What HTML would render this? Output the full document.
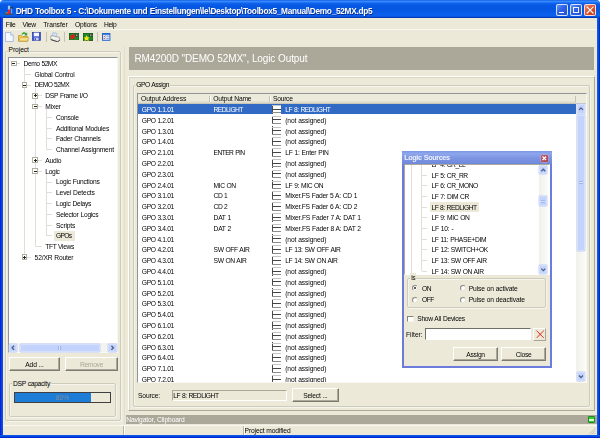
<!DOCTYPE html>
<html><head><meta charset="utf-8"><title>DHD Toolbox 5</title>
<style>
html,body{margin:0;padding:0;}
body{width:600px;height:438px;overflow:hidden;background:#ECE9D8;font-family:"Liberation Sans",sans-serif;position:relative;}
div,span.t{position:absolute;box-sizing:border-box;}
span.t{white-space:nowrap;will-change:opacity;opacity:0.999;}
.grp{border:0.8px solid #CDCBBB;border-radius:2px;box-shadow:0.7px 0.7px 0 #FAF9F4,inset 0.7px 0.7px 0 #FAF9F4;}
.sunk{border:1px solid;border-color:#8F9398 #F8F7F2 #F8F7F2 #8F9398;background:#fff;}
.btn{border:1px solid;border-color:#fff #7D7B70 #7D7B70 #fff;background:#ECE9D8;box-shadow:inset -1px -1px 0 #ACA899;text-align:center;}
.sb{background:#C4D3FC;border:0.6px solid #D4E0FE;border-radius:1px;box-shadow:0 0 0 0.4px #B9C9F6;}
</style></head><body>

<div style="left:0px;top:0px;width:5px;height:5px;background:#fff;"></div>
<div style="left:595px;top:0px;width:5px;height:5px;background:#fff;"></div>
<div style="left:0px;top:0px;width:600px;height:17.5px;background:linear-gradient(#0C5CE8 0%,#3D8EFB 7%,#2276F6 13%,#0C60EA 20%,#0657E1 32%,#0556E0 50%,#085CE8 70%,#0B61EE 86%,#0755DE 92%,#023CB8 97%,#002E9A 100%);border-radius:3.5px 3.5px 0 0;"></div>
<div style="left:0px;top:17px;width:3.1px;height:421px;background:linear-gradient(90deg,#0019CF,#0A3EE4 45%,#1650EC);"></div>
<div style="left:596.8px;top:17px;width:3.2px;height:421px;background:linear-gradient(90deg,#1660E8,#0046E0 60%,#0019CF);"></div>
<div style="left:0px;top:434.8px;width:600px;height:3.2px;background:linear-gradient(#1660E8,#0046E0 50%,#0019CF);"></div>
<svg style="position:absolute;left:4px;top:4.5px" width="9.6" height="10" viewBox="0 0 9.6 10"><rect x="0.2" y="8.5" width="8.8" height="1.3" fill="#5A4A34"/><rect x="1.5" y="7" width="2.5" height="1.5" fill="#8A7A60"/><rect x="3.9" y="0.7" width="2.3" height="4" fill="#A4C6F4"/><rect x="3.9" y="4.7" width="2.3" height="4" fill="#F02222"/><rect x="6.3" y="2.3" width="2.7" height="1.2" fill="#3A2C1E"/><rect x="7.3" y="3.5" width="0.8" height="5" fill="#A8C0EC"/></svg>
<span class="t" style="left:15.7px;top:5.95px;line-height:10px;font-size:8.3px;color:#fff;letter-spacing:-0.307px;word-spacing:0.307px;font-weight:bold;text-shadow:0.6px 0.6px 0 #0A2A8A;">DHD Toolbox 5 - C:\Dokumente und Einstellungen\le\Desktop\Toolbox5_Manual\Demo_52MX.dp5</span>
<div style="left:556.3px;top:4.1px;width:12.2px;height:12.3px;background:linear-gradient(135deg,#5C94F8,#2E62E4 45%,#2452DC);border:0.6px solid rgba(255,255,255,0.8);border-radius:2px;"></div>
<div style="left:559.0999999999999px;top:11.6px;width:4.6px;height:1.6px;background:#fff;"></div>
<div style="left:570.2px;top:4.1px;width:12.2px;height:12.3px;background:linear-gradient(135deg,#5C94F8,#2E62E4 45%,#2452DC);border:0.6px solid rgba(255,255,255,0.8);border-radius:2px;"></div>
<div style="left:573.2px;top:6.8px;width:6.3px;height:6.4px;border:0.7px solid rgba(255,255,255,0.9);border-top-width:1.7px;"></div>
<div style="left:583.9px;top:4.1px;width:12.2px;height:12.3px;background:linear-gradient(135deg,#EE9070,#DC5230 45%,#C23A1A);border:0.6px solid rgba(255,255,255,0.8);border-radius:2px;"></div>
<svg style="position:absolute;left:585.9px;top:6.199999999999999px" width="8.2" height="8.2" viewBox="0 0 8.2 8.2"><path d="M0.7 0.7L7.5 7.5M7.5 0.7L0.7 7.5" stroke="#fff" stroke-width="1.1" fill="none"/></svg>
<span class="t" style="left:5.8px;top:19.85px;line-height:10px;font-size:6.7px;color:#000;letter-spacing:-0.311px;">File</span>
<span class="t" style="left:22.6px;top:19.85px;line-height:10px;font-size:6.7px;color:#000;letter-spacing:-0.317px;">View</span>
<span class="t" style="left:43.2px;top:19.85px;line-height:10px;font-size:6.7px;color:#000;letter-spacing:-0.028px;">Transfer</span>
<span class="t" style="left:75px;top:19.85px;line-height:10px;font-size:6.7px;color:#000;letter-spacing:-0.143px;">Options</span>
<span class="t" style="left:104px;top:19.85px;line-height:10px;font-size:6.7px;color:#000;letter-spacing:-0.311px;">Help</span>
<div style="left:3.3px;top:29.2px;width:593.5px;height:0.8px;background:#F9F8F2;"></div>
<svg style="position:absolute;left:5.4px;top:32px" width="9" height="10" viewBox="0 0 9 10"><path d="M0.5 0.5H5.6L8.3 3.2V9.5H0.5Z" fill="#F4F8FF" stroke="#9DB3DC" stroke-width="0.8"/><path d="M5.6 0.5V3.2H8.3" fill="#D0DCF4" stroke="#9DB3DC" stroke-width="0.6"/></svg>
<svg style="position:absolute;left:17.6px;top:31.4px" width="11" height="11" viewBox="0 0 11 11"><path d="M0.5 4.5H3.8L4.8 5.5H9.8V10.3H0.5Z" fill="#F2CC55" stroke="#B8922A" stroke-width="0.7"/><path d="M0.8 10L2.4 6.6H10.4L9.6 10Z" fill="#F8E08A" stroke="#B8922A" stroke-width="0.5"/><path d="M3.6 3.2C4.6 1 7.2 0.8 8.2 2.4L9.2 1.4V4.6H6.2L7.2 3.5C6.6 2.6 5.4 2.6 4.9 3.6Z" fill="#35A030"/></svg>
<svg style="position:absolute;left:32.3px;top:32.2px" width="9" height="9" viewBox="0 0 9 9"><rect x="0.4" y="0.4" width="8" height="8" fill="#3F55D0" stroke="#2A389C" stroke-width="0.7"/><rect x="1.8" y="0.7" width="5.2" height="3.6" fill="#F4F6FF"/><rect x="2.2" y="5.6" width="4.4" height="2.8" fill="#C8CEEC"/><rect x="2.8" y="6.1" width="1.2" height="2" fill="#3F55D0"/></svg>
<div style="left:45.5px;top:31.8px;width:0.8px;height:10px;background:#C5C2B2;"></div>
<svg style="position:absolute;left:50px;top:31.6px" width="11" height="10.4" viewBox="0 0 11 10.4"><path d="M3 0.5L7.2 1.5L6.2 5L1.8 4Z" fill="#CFE2FA" stroke="#8AA6D0" stroke-width="0.5"/><path d="M0.6 4.2L2 3.6L9.6 5.4L9.8 8.2L7.6 9.8L0.8 7.6Z" fill="#E8E8E4" stroke="#8A8A8A" stroke-width="0.6"/><path d="M0.8 7.6L7.6 9.8L9.8 8.2" stroke="#333" stroke-width="0.9" fill="none"/><path d="M2 5.4L7.4 6.8" stroke="#fff" stroke-width="0.9"/></svg>
<div style="left:64.0px;top:31.8px;width:0.8px;height:10px;background:#C5C2B2;"></div>
<svg style="position:absolute;left:68.8px;top:32.8px" width="10" height="7.4" viewBox="0 0 10 7.4"><rect x="0" y="0" width="10" height="7.4" fill="#1F8A28"/><rect x="0" y="0" width="10" height="7.4" fill="none" stroke="#14401A" stroke-width="0.8"/><rect x="6" y="1" width="3" height="2.6" fill="#3A3A3A"/><rect x="7" y="1.6" width="1.4" height="1.2" fill="#C8C8C8"/><path d="M3.6 0.6L4.7 2.6L6.8 2.8L5.2 4.2L5.8 6.6L3.6 5.4L1.4 6.6L2 4.2L0.6 2.8L2.6 2.6Z" fill="#E81818"/></svg>
<svg style="position:absolute;left:82.7px;top:32.8px" width="10" height="8.6" viewBox="0 0 10 8.6"><rect x="0" y="0" width="10" height="7.4" fill="#1F8A28"/><rect x="0" y="0" width="10" height="7.4" fill="none" stroke="#14401A" stroke-width="0.8"/><rect x="6" y="1" width="3" height="2.6" fill="#3A3A3A"/><rect x="7" y="1.6" width="1.4" height="1.2" fill="#C8C8C8"/><path d="M3.6 2.2L4.7 4.2L6.8 4.4L5.2 5.8L5.8 8.2L3.6 7L1.4 8.2L2 5.8L0.6 4.4L2.6 4.2Z" fill="#F4E818"/></svg>
<div style="left:96.5px;top:31.8px;width:0.8px;height:10px;background:#C5C2B2;"></div>
<svg style="position:absolute;left:102.4px;top:33px" width="8.4" height="7.8" viewBox="0 0 8.4 7.8"><rect x="0.5" y="0.5" width="7.4" height="6.8" fill="#E4EEFC" stroke="#2468D0" stroke-width="1"/><rect x="0.5" y="0.3" width="7.4" height="1.5" fill="#2468D0"/><path d="M1.6 3L2.3 3.8L3.4 2.4M1.6 5.2L2.3 6L3.4 4.6" stroke="#D03020" stroke-width="0.8" fill="none"/><path d="M4.4 3.2H6.8M4.4 5.4H6.8" stroke="#5C8CE0" stroke-width="0.8"/></svg>
<div class="grp" style="left:4.6px;top:50.5px;width:116.4px;height:370.8px;"></div>
<span class="t" style="left:7.6px;top:45.35px;line-height:10px;font-size:6.7px;color:#000;letter-spacing:-0.079px;background:#ECE9D8;padding:0 1px;">Project</span>
<div class="sunk" style="left:7.8px;top:56.6px;width:110.2px;height:296.2px;"></div>
<div style="left:24.15px;top:66.4px;width:0.7px;height:190.85999999999999px;background:#E0DED5;"></div>
<div style="left:34.85px;top:87.94px;width:0.7px;height:158.55px;background:#E0DED5;"></div>
<div style="left:45.65px;top:109.47999999999999px;width:0.7px;height:40.08000000000001px;background:#E0DED5;"></div>
<div style="left:45.65px;top:174.1px;width:0.7px;height:61.620000000000005px;background:#E0DED5;"></div>
<div style="left:13.8px;top:63.05px;width:6.199999999999999px;height:0.7px;background:#E0DED5;"></div>
<span class="t" style="left:23.6px;top:58.95px;line-height:10px;font-size:6.7px;color:#000;letter-spacing:-0.476px;word-spacing:0.476px;">Demo 52MX</span>
<div style="left:10.9px;top:60.5px;width:5.8px;height:5.8px;background:#fff;border:0.7px solid #B0AE9E;"></div>
<div style="left:12.200000000000001px;top:63.0px;width:3.2px;height:0.8px;background:#222;"></div>
<div style="left:24.5px;top:73.82000000000001px;width:6.5px;height:0.7px;background:#E0DED5;"></div>
<span class="t" style="left:34.6px;top:69.72px;line-height:10px;font-size:6.7px;color:#000;letter-spacing:-0.218px;word-spacing:0.218px;">Global Control</span>
<div style="left:24.5px;top:84.59px;width:6.5px;height:0.7px;background:#E0DED5;"></div>
<span class="t" style="left:34.6px;top:80.49px;line-height:10px;font-size:6.7px;color:#000;letter-spacing:-0.605px;word-spacing:0.605px;">DEMO 52MX</span>
<div style="left:21.6px;top:82.03999999999999px;width:5.8px;height:5.8px;background:#fff;border:0.7px solid #B0AE9E;"></div>
<div style="left:22.9px;top:84.53999999999999px;width:3.2px;height:0.8px;background:#222;"></div>
<div style="left:35.2px;top:95.36000000000001px;width:6.499999999999993px;height:0.7px;background:#E0DED5;"></div>
<span class="t" style="left:45.3px;top:91.26px;line-height:10px;font-size:6.7px;color:#000;letter-spacing:-0.299px;word-spacing:0.299px;">DSP Frame I/O</span>
<div style="left:32.300000000000004px;top:92.81px;width:5.8px;height:5.8px;background:#fff;border:0.7px solid #B0AE9E;"></div>
<div style="left:33.6px;top:95.31px;width:3.2px;height:0.8px;background:#222;"></div>
<div style="left:34.800000000000004px;top:94.11000000000001px;width:0.8px;height:3.2px;background:#222;"></div>
<div style="left:35.2px;top:106.13px;width:6.499999999999993px;height:0.7px;background:#E0DED5;"></div>
<span class="t" style="left:45.3px;top:102.03px;line-height:10px;font-size:6.7px;color:#000;letter-spacing:-0.171px;">Mixer</span>
<div style="left:32.300000000000004px;top:103.57999999999998px;width:5.8px;height:5.8px;background:#fff;border:0.7px solid #B0AE9E;"></div>
<div style="left:33.6px;top:106.07999999999998px;width:3.2px;height:0.8px;background:#222;"></div>
<div style="left:46.0px;top:116.9px;width:6.399999999999999px;height:0.7px;background:#E0DED5;"></div>
<span class="t" style="left:56.0px;top:112.80px;line-height:10px;font-size:6.7px;color:#000;letter-spacing:-0.271px;">Console</span>
<div style="left:46.0px;top:127.67000000000002px;width:6.399999999999999px;height:0.7px;background:#E0DED5;"></div>
<span class="t" style="left:56.0px;top:123.57px;line-height:10px;font-size:6.7px;color:#000;letter-spacing:-0.205px;word-spacing:0.205px;">Additional Modules</span>
<div style="left:46.0px;top:138.44px;width:6.399999999999999px;height:0.7px;background:#E0DED5;"></div>
<span class="t" style="left:56.0px;top:134.34px;line-height:10px;font-size:6.7px;color:#000;letter-spacing:-0.223px;word-spacing:0.223px;">Fader Channels</span>
<div style="left:46.0px;top:149.21px;width:6.399999999999999px;height:0.7px;background:#E0DED5;"></div>
<span class="t" style="left:56.0px;top:145.11px;line-height:10px;font-size:6.7px;color:#000;letter-spacing:-0.209px;word-spacing:0.209px;">Channel Assignment</span>
<div style="left:35.2px;top:159.98px;width:6.499999999999993px;height:0.7px;background:#E0DED5;"></div>
<span class="t" style="left:45.3px;top:155.88px;line-height:10px;font-size:6.7px;color:#000;letter-spacing:-0.204px;">Audio</span>
<div style="left:32.300000000000004px;top:157.42999999999998px;width:5.8px;height:5.8px;background:#fff;border:0.7px solid #B0AE9E;"></div>
<div style="left:33.6px;top:159.92999999999998px;width:3.2px;height:0.8px;background:#222;"></div>
<div style="left:34.800000000000004px;top:158.73px;width:0.8px;height:3.2px;background:#222;"></div>
<div style="left:35.2px;top:170.75px;width:6.499999999999993px;height:0.7px;background:#E0DED5;"></div>
<span class="t" style="left:45.3px;top:166.65px;line-height:10px;font-size:6.7px;color:#000;letter-spacing:-0.338px;">Logic</span>
<div style="left:32.300000000000004px;top:168.2px;width:5.8px;height:5.8px;background:#fff;border:0.7px solid #B0AE9E;"></div>
<div style="left:33.6px;top:170.7px;width:3.2px;height:0.8px;background:#222;"></div>
<div style="left:46.0px;top:181.52px;width:6.399999999999999px;height:0.7px;background:#E0DED5;"></div>
<span class="t" style="left:56.0px;top:177.42px;line-height:10px;font-size:6.7px;color:#000;letter-spacing:-0.239px;word-spacing:0.239px;">Logic Functions</span>
<div style="left:46.0px;top:192.29000000000002px;width:6.399999999999999px;height:0.7px;background:#E0DED5;"></div>
<span class="t" style="left:56.0px;top:188.19px;line-height:10px;font-size:6.7px;color:#000;letter-spacing:-0.149px;word-spacing:0.149px;">Level Detects</span>
<div style="left:46.0px;top:203.06px;width:6.399999999999999px;height:0.7px;background:#E0DED5;"></div>
<span class="t" style="left:56.0px;top:198.96px;line-height:10px;font-size:6.7px;color:#000;letter-spacing:-0.285px;word-spacing:0.285px;">Logic Delays</span>
<div style="left:46.0px;top:213.83px;width:6.399999999999999px;height:0.7px;background:#E0DED5;"></div>
<span class="t" style="left:56.0px;top:209.73px;line-height:10px;font-size:6.7px;color:#000;letter-spacing:-0.244px;word-spacing:0.244px;">Selector Logics</span>
<div style="left:46.0px;top:224.6px;width:6.399999999999999px;height:0.7px;background:#E0DED5;"></div>
<span class="t" style="left:56.0px;top:220.50px;line-height:10px;font-size:6.7px;color:#000;letter-spacing:-0.196px;">Scripts</span>
<div style="left:46.0px;top:235.37px;width:6.399999999999999px;height:0.7px;background:#E0DED5;"></div>
<div style="left:54.2px;top:230.52px;width:20.6px;height:10.6px;background:#ECE9D8;"></div>
<span class="t" style="left:56.0px;top:231.27px;line-height:10px;font-size:6.7px;color:#000;letter-spacing:-0.680px;">GPOs</span>
<div style="left:35.2px;top:246.14000000000001px;width:6.499999999999993px;height:0.7px;background:#E0DED5;"></div>
<span class="t" style="left:45.3px;top:242.04px;line-height:10px;font-size:6.7px;color:#000;letter-spacing:-0.389px;word-spacing:0.389px;">TFT Views</span>
<div style="left:24.5px;top:256.90999999999997px;width:6.5px;height:0.7px;background:#E0DED5;"></div>
<span class="t" style="left:34.6px;top:252.81px;line-height:10px;font-size:6.7px;color:#000;letter-spacing:-0.163px;word-spacing:0.163px;">52/XR Router</span>
<div style="left:21.6px;top:254.35999999999999px;width:5.8px;height:5.8px;background:#fff;border:0.7px solid #B0AE9E;"></div>
<div style="left:22.9px;top:256.86px;width:3.2px;height:0.8px;background:#222;"></div>
<div style="left:24.1px;top:255.66px;width:0.8px;height:3.2px;background:#222;"></div>
<div style="left:8.8px;top:343.4px;width:108.2px;height:8.6px;background:#F4F3EE;"></div>
<div class="sb" style="left:9.1px;top:343.6px;width:8px;height:8.4px;"></div>
<div class="sb" style="left:19.5px;top:343.6px;width:80.2px;height:8.4px;"></div>
<div style="left:57.5px;top:345.8px;width:3.5px;height:4px;background:#DCE5FD;border-left:0.6px solid #9FB4EC;border-right:0.6px solid #9FB4EC;"></div>
<div class="sb" style="left:108px;top:343.6px;width:8.8px;height:8.4px;"></div>
<div class="btn" style="left:8.8px;top:356.8px;width:51.5px;height:14.6px;"></div>
<span class="t" style="left:8.8px;top:359.75px;line-height:10px;font-size:6.7px;color:#000;letter-spacing:-0.143px;word-spacing:0.143px;width:51.5px;text-align:center;">Add ...</span>
<div class="btn" style="left:65px;top:356.8px;width:53px;height:14.6px;"></div>
<span class="t" style="left:65px;top:359.75px;line-height:10px;font-size:6.7px;color:#ACA899;letter-spacing:-0.278px;width:53px;text-align:center;">Remove</span>
<div class="grp" style="left:8.8px;top:383px;width:107.4px;height:33.8px;"></div>
<span class="t" style="left:12px;top:378.55px;line-height:10px;font-size:6.7px;color:#000;letter-spacing:-0.280px;word-spacing:0.280px;background:#ECE9D8;padding:0 1px;">DSP capacity</span>
<div style="left:14px;top:391.8px;width:97px;height:10.8px;background:#ECE9D8;border:1px solid #404040;"></div>
<div style="left:15px;top:392.8px;width:76px;height:8.8px;background:#1C7CD6;"></div>
<span class="t" style="left:14px;top:392.95px;line-height:10px;font-size:6.7px;color:#8A8F9A;letter-spacing:0.107px;width:97px;text-align:center;">80%</span>
<div style="left:124.0px;top:46px;width:0.8px;height:378px;background:#E2DFD0;"></div>
<div style="left:129px;top:47px;width:465.3px;height:23px;background:#ACA899;"></div>
<span class="t" style="left:134.5px;top:54.35px;line-height:10px;font-size:10.0px;color:#fff;letter-spacing:-0.109px;word-spacing:0.109px;line-height:14px;top:52.2px;">RM4200D "DEMO 52MX", Logic Output</span>
<div style="left:128px;top:76.3px;width:467px;height:334.5px;border:1px solid #fff;border-right-color:#ACA899;border-bottom-color:#ACA899;box-shadow:inset 1px 1px 0 #D8D5C4;"></div>
<div class="grp" style="left:132.8px;top:84.5px;width:457.5px;height:322px;"></div>
<span class="t" style="left:135.2px;top:80.15px;line-height:10px;font-size:6.7px;color:#000;letter-spacing:-0.407px;word-spacing:0.407px;background:#ECE9D8;padding:0 1px;">GPO Assign</span>
<div class="sunk" style="left:136.8px;top:92.8px;width:450.5px;height:290.2px;"></div>
<div style="left:137.8px;top:93.8px;width:448.5px;height:10px;background:#EBEADB;border-bottom:1px solid #CBC7B8;box-shadow:inset 0 -1.5px 0 #DEDBCB;"></div>
<div style="left:209.3px;top:95.5px;width:0.8px;height:6.5px;background:#C5C2B2;"></div>
<div style="left:210.10000000000002px;top:95.5px;width:0.7px;height:6.5px;background:#fff;"></div>
<div style="left:269.3px;top:95.5px;width:0.8px;height:6.5px;background:#C5C2B2;"></div>
<div style="left:270.1px;top:95.5px;width:0.7px;height:6.5px;background:#fff;"></div>
<div style="left:575.2px;top:95.5px;width:0.8px;height:6.5px;background:#C5C2B2;"></div>
<div style="left:576.0px;top:95.5px;width:0.7px;height:6.5px;background:#fff;"></div>
<span class="t" style="left:141px;top:94.35px;line-height:10px;font-size:6.7px;color:#000;letter-spacing:-0.062px;word-spacing:0.062px;">Output Address</span>
<span class="t" style="left:213.3px;top:94.35px;line-height:10px;font-size:6.7px;color:#000;letter-spacing:-0.164px;word-spacing:0.164px;">Output Name</span>
<span class="t" style="left:273px;top:94.35px;line-height:10px;font-size:6.7px;color:#000;letter-spacing:-0.255px;">Source</span>
<div style="left:137.8px;top:103.8px;width:439.5px;height:278.2px;overflow:hidden;">
<div style="left:0px;top:0.0px;width:439.5px;height:10.4px;background:#316AC5;"></div>
<div style="left:134.2px;top:1.0px;width:9.2px;height:8.8px;background:#fff;"></div>
<span class="t" style="left:4.0px;top:1.15px;line-height:10px;font-size:6.7px;color:#fff;letter-spacing:-0.349px;word-spacing:0.349px;">GPO 1.1.01</span>
<span class="t" style="left:75.79999999999998px;top:1.15px;line-height:10px;font-size:6.7px;color:#fff;letter-spacing:-0.578px;">REDLIGHT</span>
<span class="t" style="left:147.39999999999998px;top:1.15px;line-height:10px;font-size:6.7px;color:#fff;letter-spacing:-0.470px;word-spacing:0.470px;">LF 8: REDLIGHT</span>
<div style="left:134.39999999999998px;top:1.0px;width:0.9px;height:8.8px;background:#4A4A4A;"></div>
<div style="left:134.39999999999998px;top:1.3px;width:8.8px;height:0.8px;background:#C4C4C4;"></div>
<div style="left:134.39999999999998px;top:4.8px;width:8.8px;height:0.9px;background:#444;"></div>
<div style="left:134.39999999999998px;top:8.6px;width:8.8px;height:0.9px;background:#8C8C8C;"></div>
<span class="t" style="left:4.0px;top:11.95px;line-height:10px;font-size:6.7px;color:#000;letter-spacing:-0.349px;word-spacing:0.349px;">GPO 1.2.01</span>
<span class="t" style="left:147.39999999999998px;top:11.95px;line-height:10px;font-size:6.7px;color:#000;letter-spacing:-0.097px;word-spacing:0.097px;">(not assigned)</span>
<div style="left:134.39999999999998px;top:11.799999999999997px;width:0.9px;height:8.8px;background:#4A4A4A;"></div>
<div style="left:134.39999999999998px;top:12.099999999999998px;width:8.8px;height:0.8px;background:#C4C4C4;"></div>
<div style="left:134.39999999999998px;top:15.599999999999998px;width:8.8px;height:0.9px;background:#444;"></div>
<div style="left:134.39999999999998px;top:19.4px;width:8.8px;height:0.9px;background:#8C8C8C;"></div>
<span class="t" style="left:4.0px;top:22.75px;line-height:10px;font-size:6.7px;color:#000;letter-spacing:-0.349px;word-spacing:0.349px;">GPO 1.3.01</span>
<span class="t" style="left:147.39999999999998px;top:22.75px;line-height:10px;font-size:6.7px;color:#000;letter-spacing:-0.097px;word-spacing:0.097px;">(not assigned)</span>
<div style="left:134.39999999999998px;top:22.60000000000001px;width:0.9px;height:8.8px;background:#4A4A4A;"></div>
<div style="left:134.39999999999998px;top:22.90000000000001px;width:8.8px;height:0.8px;background:#C4C4C4;"></div>
<div style="left:134.39999999999998px;top:26.40000000000001px;width:8.8px;height:0.9px;background:#444;"></div>
<div style="left:134.39999999999998px;top:30.20000000000001px;width:8.8px;height:0.9px;background:#8C8C8C;"></div>
<span class="t" style="left:4.0px;top:33.55px;line-height:10px;font-size:6.7px;color:#000;letter-spacing:-0.349px;word-spacing:0.349px;">GPO 1.4.01</span>
<span class="t" style="left:147.39999999999998px;top:33.55px;line-height:10px;font-size:6.7px;color:#000;letter-spacing:-0.097px;word-spacing:0.097px;">(not assigned)</span>
<div style="left:134.39999999999998px;top:33.39999999999999px;width:0.9px;height:8.8px;background:#4A4A4A;"></div>
<div style="left:134.39999999999998px;top:33.69999999999999px;width:8.8px;height:0.8px;background:#C4C4C4;"></div>
<div style="left:134.39999999999998px;top:37.19999999999999px;width:8.8px;height:0.9px;background:#444;"></div>
<div style="left:134.39999999999998px;top:40.99999999999999px;width:8.8px;height:0.9px;background:#8C8C8C;"></div>
<span class="t" style="left:4.0px;top:44.35px;line-height:10px;font-size:6.7px;color:#000;letter-spacing:-0.349px;word-spacing:0.349px;">GPO 2.1.01</span>
<span class="t" style="left:75.79999999999998px;top:44.35px;line-height:10px;font-size:6.7px;color:#000;letter-spacing:-0.587px;word-spacing:0.587px;">ENTER PIN</span>
<span class="t" style="left:147.39999999999998px;top:44.35px;line-height:10px;font-size:6.7px;color:#000;letter-spacing:-0.216px;word-spacing:0.216px;">LF 1: Enter PIN</span>
<div style="left:134.39999999999998px;top:44.2px;width:0.9px;height:8.8px;background:#4A4A4A;"></div>
<div style="left:134.39999999999998px;top:44.5px;width:8.8px;height:0.8px;background:#C4C4C4;"></div>
<div style="left:134.39999999999998px;top:48.0px;width:8.8px;height:0.9px;background:#444;"></div>
<div style="left:134.39999999999998px;top:51.800000000000004px;width:8.8px;height:0.9px;background:#8C8C8C;"></div>
<span class="t" style="left:4.0px;top:55.15px;line-height:10px;font-size:6.7px;color:#000;letter-spacing:-0.349px;word-spacing:0.349px;">GPO 2.2.01</span>
<span class="t" style="left:147.39999999999998px;top:55.15px;line-height:10px;font-size:6.7px;color:#000;letter-spacing:-0.097px;word-spacing:0.097px;">(not assigned)</span>
<div style="left:134.39999999999998px;top:55.000000000000014px;width:0.9px;height:8.8px;background:#4A4A4A;"></div>
<div style="left:134.39999999999998px;top:55.30000000000001px;width:8.8px;height:0.8px;background:#C4C4C4;"></div>
<div style="left:134.39999999999998px;top:58.80000000000001px;width:8.8px;height:0.9px;background:#444;"></div>
<div style="left:134.39999999999998px;top:62.600000000000016px;width:8.8px;height:0.9px;background:#8C8C8C;"></div>
<span class="t" style="left:4.0px;top:65.95px;line-height:10px;font-size:6.7px;color:#000;letter-spacing:-0.349px;word-spacing:0.349px;">GPO 2.3.01</span>
<span class="t" style="left:147.39999999999998px;top:65.95px;line-height:10px;font-size:6.7px;color:#000;letter-spacing:-0.097px;word-spacing:0.097px;">(not assigned)</span>
<div style="left:134.39999999999998px;top:65.80000000000003px;width:0.9px;height:8.8px;background:#4A4A4A;"></div>
<div style="left:134.39999999999998px;top:66.10000000000002px;width:8.8px;height:0.8px;background:#C4C4C4;"></div>
<div style="left:134.39999999999998px;top:69.60000000000002px;width:8.8px;height:0.9px;background:#444;"></div>
<div style="left:134.39999999999998px;top:73.40000000000002px;width:8.8px;height:0.9px;background:#8C8C8C;"></div>
<span class="t" style="left:4.0px;top:76.75px;line-height:10px;font-size:6.7px;color:#000;letter-spacing:-0.349px;word-spacing:0.349px;">GPO 2.4.01</span>
<span class="t" style="left:75.79999999999998px;top:76.75px;line-height:10px;font-size:6.7px;color:#000;letter-spacing:-0.421px;word-spacing:0.421px;">MIC ON</span>
<span class="t" style="left:147.39999999999998px;top:76.75px;line-height:10px;font-size:6.7px;color:#000;letter-spacing:-0.346px;word-spacing:0.346px;">LF 9: MIC ON</span>
<div style="left:134.39999999999998px;top:76.60000000000001px;width:0.9px;height:8.8px;background:#4A4A4A;"></div>
<div style="left:134.39999999999998px;top:76.9px;width:8.8px;height:0.8px;background:#C4C4C4;"></div>
<div style="left:134.39999999999998px;top:80.4px;width:8.8px;height:0.9px;background:#444;"></div>
<div style="left:134.39999999999998px;top:84.2px;width:8.8px;height:0.9px;background:#8C8C8C;"></div>
<span class="t" style="left:4.0px;top:87.55px;line-height:10px;font-size:6.7px;color:#000;letter-spacing:-0.349px;word-spacing:0.349px;">GPO 3.1.01</span>
<span class="t" style="left:75.79999999999998px;top:87.55px;line-height:10px;font-size:6.7px;color:#000;letter-spacing:-0.511px;word-spacing:0.511px;">CD 1</span>
<span class="t" style="left:147.39999999999998px;top:87.55px;line-height:10px;font-size:6.7px;color:#000;letter-spacing:-0.216px;word-spacing:0.216px;">Mixer.FS Fader 5 A: CD 1</span>
<div style="left:134.39999999999998px;top:87.39999999999999px;width:0.9px;height:8.8px;background:#4A4A4A;"></div>
<div style="left:134.39999999999998px;top:87.69999999999999px;width:8.8px;height:0.8px;background:#C4C4C4;"></div>
<div style="left:134.39999999999998px;top:91.19999999999999px;width:8.8px;height:0.9px;background:#444;"></div>
<div style="left:134.39999999999998px;top:94.99999999999999px;width:8.8px;height:0.9px;background:#8C8C8C;"></div>
<span class="t" style="left:4.0px;top:98.35px;line-height:10px;font-size:6.7px;color:#000;letter-spacing:-0.349px;word-spacing:0.349px;">GPO 3.2.01</span>
<span class="t" style="left:75.79999999999998px;top:98.35px;line-height:10px;font-size:6.7px;color:#000;letter-spacing:-0.511px;word-spacing:0.511px;">CD 2</span>
<span class="t" style="left:147.39999999999998px;top:98.35px;line-height:10px;font-size:6.7px;color:#000;letter-spacing:-0.216px;word-spacing:0.216px;">Mixer.FS Fader 6 A: CD 2</span>
<div style="left:134.39999999999998px;top:98.2px;width:0.9px;height:8.8px;background:#4A4A4A;"></div>
<div style="left:134.39999999999998px;top:98.5px;width:8.8px;height:0.8px;background:#C4C4C4;"></div>
<div style="left:134.39999999999998px;top:102.0px;width:8.8px;height:0.9px;background:#444;"></div>
<div style="left:134.39999999999998px;top:105.8px;width:8.8px;height:0.9px;background:#8C8C8C;"></div>
<span class="t" style="left:4.0px;top:109.15px;line-height:10px;font-size:6.7px;color:#000;letter-spacing:-0.349px;word-spacing:0.349px;">GPO 3.3.01</span>
<span class="t" style="left:75.79999999999998px;top:109.15px;line-height:10px;font-size:6.7px;color:#000;letter-spacing:-0.264px;word-spacing:0.264px;">DAT 1</span>
<span class="t" style="left:147.39999999999998px;top:109.15px;line-height:10px;font-size:6.7px;color:#000;letter-spacing:-0.181px;word-spacing:0.181px;">Mixer.FS Fader 7 A: DAT 1</span>
<div style="left:134.39999999999998px;top:109.00000000000001px;width:0.9px;height:8.8px;background:#4A4A4A;"></div>
<div style="left:134.39999999999998px;top:109.30000000000001px;width:8.8px;height:0.8px;background:#C4C4C4;"></div>
<div style="left:134.39999999999998px;top:112.80000000000001px;width:8.8px;height:0.9px;background:#444;"></div>
<div style="left:134.39999999999998px;top:116.60000000000001px;width:8.8px;height:0.9px;background:#8C8C8C;"></div>
<span class="t" style="left:4.0px;top:119.95px;line-height:10px;font-size:6.7px;color:#000;letter-spacing:-0.349px;word-spacing:0.349px;">GPO 3.4.01</span>
<span class="t" style="left:75.79999999999998px;top:119.95px;line-height:10px;font-size:6.7px;color:#000;letter-spacing:-0.264px;word-spacing:0.264px;">DAT 2</span>
<span class="t" style="left:147.39999999999998px;top:119.95px;line-height:10px;font-size:6.7px;color:#000;letter-spacing:-0.181px;word-spacing:0.181px;">Mixer.FS Fader 8 A: DAT 2</span>
<div style="left:134.39999999999998px;top:119.80000000000003px;width:0.9px;height:8.8px;background:#4A4A4A;"></div>
<div style="left:134.39999999999998px;top:120.10000000000002px;width:8.8px;height:0.8px;background:#C4C4C4;"></div>
<div style="left:134.39999999999998px;top:123.60000000000002px;width:8.8px;height:0.9px;background:#444;"></div>
<div style="left:134.39999999999998px;top:127.40000000000002px;width:8.8px;height:0.9px;background:#8C8C8C;"></div>
<span class="t" style="left:4.0px;top:130.75px;line-height:10px;font-size:6.7px;color:#000;letter-spacing:-0.349px;word-spacing:0.349px;">GPO 4.1.01</span>
<span class="t" style="left:147.39999999999998px;top:130.75px;line-height:10px;font-size:6.7px;color:#000;letter-spacing:-0.097px;word-spacing:0.097px;">(not assigned)</span>
<div style="left:134.39999999999998px;top:130.60000000000002px;width:0.9px;height:8.8px;background:#4A4A4A;"></div>
<div style="left:134.39999999999998px;top:130.90000000000003px;width:8.8px;height:0.8px;background:#C4C4C4;"></div>
<div style="left:134.39999999999998px;top:134.40000000000003px;width:8.8px;height:0.9px;background:#444;"></div>
<div style="left:134.39999999999998px;top:138.20000000000002px;width:8.8px;height:0.9px;background:#8C8C8C;"></div>
<span class="t" style="left:4.0px;top:141.55px;line-height:10px;font-size:6.7px;color:#000;letter-spacing:-0.349px;word-spacing:0.349px;">GPO 4.2.01</span>
<span class="t" style="left:75.79999999999998px;top:141.55px;line-height:10px;font-size:6.7px;color:#000;letter-spacing:-0.361px;word-spacing:0.361px;">SW OFF AIR</span>
<span class="t" style="left:147.39999999999998px;top:141.55px;line-height:10px;font-size:6.7px;color:#000;letter-spacing:-0.311px;word-spacing:0.311px;">LF 13: SW OFF AIR</span>
<div style="left:134.39999999999998px;top:141.39999999999998px;width:0.9px;height:8.8px;background:#4A4A4A;"></div>
<div style="left:134.39999999999998px;top:141.7px;width:8.8px;height:0.8px;background:#C4C4C4;"></div>
<div style="left:134.39999999999998px;top:145.2px;width:8.8px;height:0.9px;background:#444;"></div>
<div style="left:134.39999999999998px;top:148.99999999999997px;width:8.8px;height:0.9px;background:#8C8C8C;"></div>
<span class="t" style="left:4.0px;top:152.35px;line-height:10px;font-size:6.7px;color:#000;letter-spacing:-0.349px;word-spacing:0.349px;">GPO 4.3.01</span>
<span class="t" style="left:75.79999999999998px;top:152.35px;line-height:10px;font-size:6.7px;color:#000;letter-spacing:-0.361px;word-spacing:0.361px;">SW ON AIR</span>
<span class="t" style="left:147.39999999999998px;top:152.35px;line-height:10px;font-size:6.7px;color:#000;letter-spacing:-0.307px;word-spacing:0.307px;">LF 14: SW ON AIR</span>
<div style="left:134.39999999999998px;top:152.2px;width:0.9px;height:8.8px;background:#4A4A4A;"></div>
<div style="left:134.39999999999998px;top:152.5px;width:8.8px;height:0.8px;background:#C4C4C4;"></div>
<div style="left:134.39999999999998px;top:156.0px;width:8.8px;height:0.9px;background:#444;"></div>
<div style="left:134.39999999999998px;top:159.79999999999998px;width:8.8px;height:0.9px;background:#8C8C8C;"></div>
<span class="t" style="left:4.0px;top:163.15px;line-height:10px;font-size:6.7px;color:#000;letter-spacing:-0.349px;word-spacing:0.349px;">GPO 4.4.01</span>
<span class="t" style="left:147.39999999999998px;top:163.15px;line-height:10px;font-size:6.7px;color:#000;letter-spacing:-0.097px;word-spacing:0.097px;">(not assigned)</span>
<div style="left:134.39999999999998px;top:163.0px;width:0.9px;height:8.8px;background:#4A4A4A;"></div>
<div style="left:134.39999999999998px;top:163.3px;width:8.8px;height:0.8px;background:#C4C4C4;"></div>
<div style="left:134.39999999999998px;top:166.8px;width:8.8px;height:0.9px;background:#444;"></div>
<div style="left:134.39999999999998px;top:170.6px;width:8.8px;height:0.9px;background:#8C8C8C;"></div>
<span class="t" style="left:4.0px;top:173.95px;line-height:10px;font-size:6.7px;color:#000;letter-spacing:-0.349px;word-spacing:0.349px;">GPO 5.1.01</span>
<span class="t" style="left:147.39999999999998px;top:173.95px;line-height:10px;font-size:6.7px;color:#000;letter-spacing:-0.097px;word-spacing:0.097px;">(not assigned)</span>
<div style="left:134.39999999999998px;top:173.8px;width:0.9px;height:8.8px;background:#4A4A4A;"></div>
<div style="left:134.39999999999998px;top:174.10000000000002px;width:8.8px;height:0.8px;background:#C4C4C4;"></div>
<div style="left:134.39999999999998px;top:177.60000000000002px;width:8.8px;height:0.9px;background:#444;"></div>
<div style="left:134.39999999999998px;top:181.4px;width:8.8px;height:0.9px;background:#8C8C8C;"></div>
<span class="t" style="left:4.0px;top:184.75px;line-height:10px;font-size:6.7px;color:#000;letter-spacing:-0.349px;word-spacing:0.349px;">GPO 5.2.01</span>
<span class="t" style="left:147.39999999999998px;top:184.75px;line-height:10px;font-size:6.7px;color:#000;letter-spacing:-0.097px;word-spacing:0.097px;">(not assigned)</span>
<div style="left:134.39999999999998px;top:184.60000000000002px;width:0.9px;height:8.8px;background:#4A4A4A;"></div>
<div style="left:134.39999999999998px;top:184.90000000000003px;width:8.8px;height:0.8px;background:#C4C4C4;"></div>
<div style="left:134.39999999999998px;top:188.40000000000003px;width:8.8px;height:0.9px;background:#444;"></div>
<div style="left:134.39999999999998px;top:192.20000000000002px;width:8.8px;height:0.9px;background:#8C8C8C;"></div>
<span class="t" style="left:4.0px;top:195.55px;line-height:10px;font-size:6.7px;color:#000;letter-spacing:-0.349px;word-spacing:0.349px;">GPO 5.3.01</span>
<span class="t" style="left:147.39999999999998px;top:195.55px;line-height:10px;font-size:6.7px;color:#000;letter-spacing:-0.097px;word-spacing:0.097px;">(not assigned)</span>
<div style="left:134.39999999999998px;top:195.39999999999998px;width:0.9px;height:8.8px;background:#4A4A4A;"></div>
<div style="left:134.39999999999998px;top:195.7px;width:8.8px;height:0.8px;background:#C4C4C4;"></div>
<div style="left:134.39999999999998px;top:199.2px;width:8.8px;height:0.9px;background:#444;"></div>
<div style="left:134.39999999999998px;top:202.99999999999997px;width:8.8px;height:0.9px;background:#8C8C8C;"></div>
<span class="t" style="left:4.0px;top:206.35px;line-height:10px;font-size:6.7px;color:#000;letter-spacing:-0.349px;word-spacing:0.349px;">GPO 5.4.01</span>
<span class="t" style="left:147.39999999999998px;top:206.35px;line-height:10px;font-size:6.7px;color:#000;letter-spacing:-0.097px;word-spacing:0.097px;">(not assigned)</span>
<div style="left:134.39999999999998px;top:206.2px;width:0.9px;height:8.8px;background:#4A4A4A;"></div>
<div style="left:134.39999999999998px;top:206.5px;width:8.8px;height:0.8px;background:#C4C4C4;"></div>
<div style="left:134.39999999999998px;top:210.0px;width:8.8px;height:0.9px;background:#444;"></div>
<div style="left:134.39999999999998px;top:213.79999999999998px;width:8.8px;height:0.9px;background:#8C8C8C;"></div>
<span class="t" style="left:4.0px;top:217.15px;line-height:10px;font-size:6.7px;color:#000;letter-spacing:-0.349px;word-spacing:0.349px;">GPO 6.1.01</span>
<span class="t" style="left:147.39999999999998px;top:217.15px;line-height:10px;font-size:6.7px;color:#000;letter-spacing:-0.097px;word-spacing:0.097px;">(not assigned)</span>
<div style="left:134.39999999999998px;top:217.0px;width:0.9px;height:8.8px;background:#4A4A4A;"></div>
<div style="left:134.39999999999998px;top:217.3px;width:8.8px;height:0.8px;background:#C4C4C4;"></div>
<div style="left:134.39999999999998px;top:220.8px;width:8.8px;height:0.9px;background:#444;"></div>
<div style="left:134.39999999999998px;top:224.6px;width:8.8px;height:0.9px;background:#8C8C8C;"></div>
<span class="t" style="left:4.0px;top:227.95px;line-height:10px;font-size:6.7px;color:#000;letter-spacing:-0.349px;word-spacing:0.349px;">GPO 6.2.01</span>
<span class="t" style="left:147.39999999999998px;top:227.95px;line-height:10px;font-size:6.7px;color:#000;letter-spacing:-0.097px;word-spacing:0.097px;">(not assigned)</span>
<div style="left:134.39999999999998px;top:227.8px;width:0.9px;height:8.8px;background:#4A4A4A;"></div>
<div style="left:134.39999999999998px;top:228.10000000000002px;width:8.8px;height:0.8px;background:#C4C4C4;"></div>
<div style="left:134.39999999999998px;top:231.60000000000002px;width:8.8px;height:0.9px;background:#444;"></div>
<div style="left:134.39999999999998px;top:235.4px;width:8.8px;height:0.9px;background:#8C8C8C;"></div>
<span class="t" style="left:4.0px;top:238.75px;line-height:10px;font-size:6.7px;color:#000;letter-spacing:-0.349px;word-spacing:0.349px;">GPO 6.3.01</span>
<span class="t" style="left:147.39999999999998px;top:238.75px;line-height:10px;font-size:6.7px;color:#000;letter-spacing:-0.097px;word-spacing:0.097px;">(not assigned)</span>
<div style="left:134.39999999999998px;top:238.60000000000002px;width:0.9px;height:8.8px;background:#4A4A4A;"></div>
<div style="left:134.39999999999998px;top:238.90000000000003px;width:8.8px;height:0.8px;background:#C4C4C4;"></div>
<div style="left:134.39999999999998px;top:242.40000000000003px;width:8.8px;height:0.9px;background:#444;"></div>
<div style="left:134.39999999999998px;top:246.20000000000002px;width:8.8px;height:0.9px;background:#8C8C8C;"></div>
<span class="t" style="left:4.0px;top:249.55px;line-height:10px;font-size:6.7px;color:#000;letter-spacing:-0.349px;word-spacing:0.349px;">GPO 6.4.01</span>
<span class="t" style="left:147.39999999999998px;top:249.55px;line-height:10px;font-size:6.7px;color:#000;letter-spacing:-0.097px;word-spacing:0.097px;">(not assigned)</span>
<div style="left:134.39999999999998px;top:249.39999999999998px;width:0.9px;height:8.8px;background:#4A4A4A;"></div>
<div style="left:134.39999999999998px;top:249.7px;width:8.8px;height:0.8px;background:#C4C4C4;"></div>
<div style="left:134.39999999999998px;top:253.2px;width:8.8px;height:0.9px;background:#444;"></div>
<div style="left:134.39999999999998px;top:257.0px;width:8.8px;height:0.9px;background:#8C8C8C;"></div>
<span class="t" style="left:4.0px;top:260.35px;line-height:10px;font-size:6.7px;color:#000;letter-spacing:-0.349px;word-spacing:0.349px;">GPO 7.1.01</span>
<span class="t" style="left:147.39999999999998px;top:260.35px;line-height:10px;font-size:6.7px;color:#000;letter-spacing:-0.097px;word-spacing:0.097px;">(not assigned)</span>
<div style="left:134.39999999999998px;top:260.20000000000005px;width:0.9px;height:8.8px;background:#4A4A4A;"></div>
<div style="left:134.39999999999998px;top:260.50000000000006px;width:8.8px;height:0.8px;background:#C4C4C4;"></div>
<div style="left:134.39999999999998px;top:264.00000000000006px;width:8.8px;height:0.9px;background:#444;"></div>
<div style="left:134.39999999999998px;top:267.80000000000007px;width:8.8px;height:0.9px;background:#8C8C8C;"></div>
<span class="t" style="left:4.0px;top:271.15px;line-height:10px;font-size:6.7px;color:#000;letter-spacing:-0.349px;word-spacing:0.349px;">GPO 7.2.01</span>
<span class="t" style="left:147.39999999999998px;top:271.15px;line-height:10px;font-size:6.7px;color:#000;letter-spacing:-0.097px;word-spacing:0.097px;">(not assigned)</span>
<div style="left:134.39999999999998px;top:271.0px;width:0.9px;height:8.8px;background:#4A4A4A;"></div>
<div style="left:134.39999999999998px;top:271.3px;width:8.8px;height:0.8px;background:#C4C4C4;"></div>
<div style="left:134.39999999999998px;top:274.8px;width:8.8px;height:0.9px;background:#444;"></div>
<div style="left:134.39999999999998px;top:278.6px;width:8.8px;height:0.9px;background:#8C8C8C;"></div>
</div>
<div style="left:576.4px;top:93.8px;width:9.2px;height:288.2px;background:linear-gradient(90deg,#F1F0EA,#FBFBF8);"></div>
<div style="left:576.4px;top:93.8px;width:9.2px;height:10px;background:#EBEADB;border-bottom:1px solid #CBC7B8;"></div>
<div class="sb" style="left:576.5px;top:104.1px;width:8.9px;height:9.6px;"></div>
<div class="sb" style="left:577.0px;top:114.6px;width:8.0px;height:136.8px;"></div>
<div style="left:579.0px;top:180.5px;width:4px;height:3.6px;background:#DCE5FD;border-top:0.6px solid #9FB4EC;border-bottom:0.6px solid #9FB4EC;"></div>
<div class="sb" style="left:576.5px;top:371.7px;width:8.9px;height:9.6px;"></div>
<span class="t" style="left:138px;top:390.85px;line-height:10px;font-size:6.7px;color:#000;letter-spacing:-0.143px;">Source:</span>
<div style="left:171.5px;top:389.8px;width:115.2px;height:11.4px;border:1px solid;border-color:#ACA899 #fff #fff #ACA899;background:#ECE9D8;"></div>
<span class="t" style="left:173.3px;top:390.85px;line-height:10px;font-size:6.7px;color:#000;letter-spacing:-0.470px;word-spacing:0.470px;">LF 8: REDLIGHT</span>
<div class="btn" style="left:291.5px;top:388.4px;width:47.7px;height:13.8px;"></div>
<span class="t" style="left:291.5px;top:390.85px;line-height:10px;font-size:6.7px;color:#000;letter-spacing:-0.177px;word-spacing:0.177px;width:47.7px;text-align:center;">Select ...</span>
<div style="left:125.6px;top:415.2px;width:471.2px;height:8.8px;background:#ACA899;"></div>
<span class="t" style="left:126.2px;top:415.25px;line-height:10px;font-size:6.7px;color:#fff;letter-spacing:-0.116px;word-spacing:0.116px;">Navigator, Clipboard</span>
<div style="left:587.6px;top:416.2px;width:7.6px;height:6.6px;background:#3AC83A;border:0.8px solid #1E8A1E;border-radius:1px;"></div>
<div style="left:589px;top:419.2px;width:4.8px;height:2.2px;background:#D8F8D0;"></div>
<div style="left:3.3px;top:424.6px;width:593.5px;height:0.8px;background:#C9C6B6;"></div>
<div style="left:3.3px;top:425.4px;width:593.5px;height:0.7px;background:#F8F7F1;"></div>
<div style="left:122.8px;top:426.4px;width:0.8px;height:8.2px;background:#B9B6A6;"></div>
<div style="left:123.6px;top:426.4px;width:0.7px;height:8.2px;background:#fff;"></div>
<div style="left:242.8px;top:426.4px;width:0.8px;height:8.2px;background:#B9B6A6;"></div>
<div style="left:243.60000000000002px;top:426.4px;width:0.7px;height:8.2px;background:#fff;"></div>
<span class="t" style="left:244.6px;top:425.75px;line-height:10px;font-size:6.7px;color:#000;letter-spacing:-0.138px;word-spacing:0.138px;">Project modified</span>
<svg style="position:absolute;left:588px;top:427px" width="8" height="8" viewBox="0 0 8 8"><path d="M7.5 1L1 7.5M7.5 3.5L3.5 7.5M7.5 6L6 7.5" stroke="#B8B4A0" stroke-width="0.8"/></svg>
<div style="left:402px;top:151.3px;width:150px;height:217px;background:#ECE9D8;border:2px solid #6C7CDC;border-top:none;"></div>
<div style="left:402px;top:151.3px;width:150px;height:12.6px;background:linear-gradient(#7B97E8,#8EA6EC 20%,#7B93E0 60%,#7088DC);"></div>
<span class="t" style="left:404.2px;top:153.15px;line-height:10px;font-size:7.3px;color:#EEF2FD;letter-spacing:-0.400px;word-spacing:0.400px;font-weight:bold;">Logic Sources</span>
<div style="left:540.7px;top:155.0px;width:7.6px;height:7.2px;background:linear-gradient(135deg,#BC5C6C,#AC4052);border-radius:1.2px;box-shadow:0 0 0 0.5px #C9A8C8;"></div>
<svg style="position:absolute;left:542.2px;top:156.3px" width="4.6" height="4.6" viewBox="0 0 4.6 4.6"><path d="M0.5 0.5L4.1 4.1M4.1 0.5L0.5 4.1" stroke="#fff" stroke-width="1.3" fill="none"/></svg>
<div class="sunk" style="left:404px;top:164.4px;width:145.8px;height:110.8px;border-color:#ACA899 #fff #fff #ACA899;"></div>
<div style="left:405px;top:165.4px;width:133.4px;height:108.8px;overflow:hidden;">
<div style="left:5.950000000000012px;top:0px;width:0.7px;height:109px;background:#E0DED5;"></div>
<div style="left:16.15px;top:0px;width:0.7px;height:105.9px;background:#E0DED5;"></div>
<div style="left:16.5px;top:-1.4499999999999944px;width:5.5px;height:0.7px;background:#E0DED5;"></div>
<span class="t" style="left:26.399999999999977px;top:-5.55px;line-height:10px;font-size:6.7px;color:#000;letter-spacing:-0.440px;word-spacing:0.440px;">LF 4: CR_LL</span>
<div style="left:16.5px;top:9.230000000000013px;width:5.5px;height:0.7px;background:#E0DED5;"></div>
<span class="t" style="left:26.399999999999977px;top:5.13px;line-height:10px;font-size:6.7px;color:#000;letter-spacing:-0.421px;word-spacing:0.421px;">LF 5: CR_RR</span>
<div style="left:16.5px;top:19.910000000000018px;width:5.5px;height:0.7px;background:#E0DED5;"></div>
<span class="t" style="left:26.399999999999977px;top:15.81px;line-height:10px;font-size:6.7px;color:#000;letter-spacing:-0.437px;word-spacing:0.437px;">LF 6: CR_MONO</span>
<div style="left:16.5px;top:30.589999999999996px;width:5.5px;height:0.7px;background:#E0DED5;"></div>
<span class="t" style="left:26.399999999999977px;top:26.49px;line-height:10px;font-size:6.7px;color:#000;letter-spacing:-0.371px;word-spacing:0.371px;">LF 7: DIM CR</span>
<div style="left:16.5px;top:41.27px;width:5.5px;height:0.7px;background:#E0DED5;"></div>
<div style="left:24.80000000000001px;top:36.42px;width:49.5px;height:10.6px;background:#ECE9D8;"></div>
<span class="t" style="left:26.399999999999977px;top:37.17px;line-height:10px;font-size:6.7px;color:#000;letter-spacing:-0.470px;word-spacing:0.470px;">LF 8: REDLIGHT</span>
<div style="left:16.5px;top:51.95000000000001px;width:5.5px;height:0.7px;background:#E0DED5;"></div>
<span class="t" style="left:26.399999999999977px;top:47.85px;line-height:10px;font-size:6.7px;color:#000;letter-spacing:-0.346px;word-spacing:0.346px;">LF 9: MIC ON</span>
<div style="left:16.5px;top:62.62999999999999px;width:5.5px;height:0.7px;background:#E0DED5;"></div>
<span class="t" style="left:26.399999999999977px;top:58.53px;line-height:10px;font-size:6.7px;color:#000;letter-spacing:-0.166px;word-spacing:0.166px;">LF 10: -</span>
<div style="left:16.5px;top:73.31px;width:5.5px;height:0.7px;background:#E0DED5;"></div>
<span class="t" style="left:26.399999999999977px;top:69.21px;line-height:10px;font-size:6.7px;color:#000;letter-spacing:-0.310px;word-spacing:0.310px;">LF 11: PHASE+DIM</span>
<div style="left:16.5px;top:83.99000000000001px;width:5.5px;height:0.7px;background:#E0DED5;"></div>
<span class="t" style="left:26.399999999999977px;top:79.89px;line-height:10px;font-size:6.7px;color:#000;letter-spacing:-0.297px;word-spacing:0.297px;">LF 12: SWITCH+OK</span>
<div style="left:16.5px;top:94.67000000000002px;width:5.5px;height:0.7px;background:#E0DED5;"></div>
<span class="t" style="left:26.399999999999977px;top:90.57px;line-height:10px;font-size:6.7px;color:#000;letter-spacing:-0.311px;word-spacing:0.311px;">LF 13: SW OFF AIR</span>
<div style="left:16.5px;top:105.35000000000002px;width:5.5px;height:0.7px;background:#E0DED5;"></div>
<span class="t" style="left:26.399999999999977px;top:101.25px;line-height:10px;font-size:6.7px;color:#000;letter-spacing:-0.307px;word-spacing:0.307px;">LF 14: SW ON AIR</span>
</div>
<div style="left:539.0px;top:165.4px;width:8.6px;height:108.8px;background:linear-gradient(90deg,#F1F0EA,#FBFBF8);"></div>
<div class="sb" style="left:539.2px;top:166.0px;width:8.2px;height:8.4px;"></div>
<div class="sb" style="left:539.2px;top:196.4px;width:8.2px;height:9.8px;"></div>
<div style="left:541.4px;top:199.6px;width:3.8px;height:3.4px;background:#DCE5FD;border-top:0.6px solid #9FB4EC;border-bottom:0.6px solid #9FB4EC;"></div>
<div class="sb" style="left:539.2px;top:265.2px;width:8.2px;height:8.8px;"></div>
<div class="grp" style="left:406.6px;top:277.8px;width:139.6px;height:30px;"></div>
<span class="t" style="left:410.2px;top:273.15px;line-height:10px;font-size:6.7px;color:#000;letter-spacing:-0.330px;background:#ECE9D8;padding:0 1px;">is</span>
<div style="left:411.5px;top:284.9px;width:6.6px;height:6.6px;background:#fff;border:0.8px solid;border-color:#8A8A80 #E8E6DA #E8E6DA #8A8A80;border-radius:50%;transform:rotate(-0deg);"></div>
<div style="left:413.5px;top:286.9px;width:2.6px;height:2.6px;background:#222;border-radius:50%;"></div>
<span class="t" style="left:422px;top:283.75px;line-height:10px;font-size:6.7px;color:#000;letter-spacing:-0.548px;">ON</span>
<div style="left:411.5px;top:296.5px;width:6.6px;height:6.6px;background:#fff;border:0.8px solid;border-color:#8A8A80 #E8E6DA #E8E6DA #8A8A80;border-radius:50%;transform:rotate(-0deg);"></div>
<span class="t" style="left:422px;top:295.35px;line-height:10px;font-size:6.7px;color:#000;letter-spacing:-0.486px;">OFF</span>
<div style="left:459.5px;top:284.9px;width:6.6px;height:6.6px;background:#fff;border:0.8px solid;border-color:#8A8A80 #E8E6DA #E8E6DA #8A8A80;border-radius:50%;transform:rotate(-0deg);"></div>
<span class="t" style="left:468.8px;top:283.75px;line-height:10px;font-size:6.7px;color:#000;letter-spacing:-0.138px;word-spacing:0.138px;">Pulse on activate</span>
<div style="left:459.5px;top:296.5px;width:6.6px;height:6.6px;background:#fff;border:0.8px solid;border-color:#8A8A80 #E8E6DA #E8E6DA #8A8A80;border-radius:50%;transform:rotate(-0deg);"></div>
<span class="t" style="left:468.8px;top:295.35px;line-height:10px;font-size:6.7px;color:#000;letter-spacing:-0.139px;word-spacing:0.139px;">Pulse on deactivate</span>
<div style="left:407.2px;top:315.6px;width:6.6px;height:6.6px;background:#fff;border:0.8px solid;border-color:#85837A #F4F3EC #F4F3EC #85837A;"></div>
<span class="t" style="left:417.2px;top:314.15px;line-height:10px;font-size:6.7px;color:#000;letter-spacing:-0.259px;word-spacing:0.259px;">Show All Devices</span>
<span class="t" style="left:406px;top:329.55px;line-height:10px;font-size:6.7px;color:#000;letter-spacing:-0.005px;">Filter:</span>
<div style="left:424.6px;top:328.2px;width:106px;height:11.6px;background:#fff;border:1px solid;border-color:#716F64 #fff #fff #716F64;"></div>
<div class="btn" style="left:533.4px;top:327.6px;width:12.8px;height:13px;border-color:#fff #A8A598 #A8A598 #fff;box-shadow:none;"></div>
<svg style="position:absolute;left:535.6px;top:329.8px" width="8.4" height="8.6" viewBox="0 0 8 8"><path d="M0.5 0.5L7.5 7.5M7.5 0.5L0.5 7.5" stroke="#E02010" stroke-width="0.9"/></svg>
<div class="btn" style="left:453.2px;top:347.2px;width:44.8px;height:14px;"></div>
<span class="t" style="left:453.2px;top:349.85px;line-height:10px;font-size:6.7px;color:#000;letter-spacing:-0.267px;width:44.8px;text-align:center;">Assign</span>
<div class="btn" style="left:501.2px;top:347.2px;width:44.8px;height:14px;"></div>
<span class="t" style="left:501.2px;top:349.85px;line-height:10px;font-size:6.7px;color:#000;letter-spacing:-0.322px;width:44.8px;text-align:center;">Close</span>
<svg style="position:absolute;left:0;top:0;pointer-events:none" width="600" height="438"><path d="M14.1 345.8L12.1 347.8L14.1 349.8M111.4 345.8L113.4 347.8L111.4 349.8M578.95 109.89999999999999L580.95 107.89999999999999L582.95 109.89999999999999M578.95 375.5L580.95 377.5L582.95 375.5M541.3000000000001 171.2L543.3000000000001 169.2L545.3000000000001 171.2M541.3000000000001 268.59999999999997L543.3000000000001 270.59999999999997L545.3000000000001 268.59999999999997" stroke="#4D6185" stroke-width="1.3" fill="none"/></svg>
</body></html>
